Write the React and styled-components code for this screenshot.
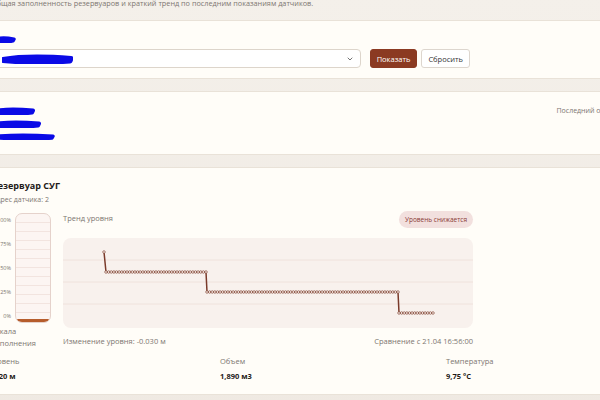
import React from 'react';
import styled, { createGlobalStyle } from 'styled-components';

const GlobalStyle = createGlobalStyle`
  html, body {
    margin: 0;
    padding: 0;
    overflow: hidden;
    background: #f0ebe5;
  }
  body {
    font-family: "Open Sans", "Noto Sans", sans-serif;
    color: #2b2622;
  }
`;

const COLORS = {
  border: '#e9e2d8',
  card: '#fffdf8',
  muted: '#7d7671',
  brown: '#8b3a22',
  line: '#7a3a2a',
};

const Page = styled.div`
  width: 684px;
  margin-left: -24px;
  margin-top: -4px;
  display: flex;
  flex-direction: column;
  gap: 12px;
  background: linear-gradient(180deg, #f4f0ea 0%, #efe9e2 100%);
  padding-bottom: 20px;
`;

const Subtitle = styled.div`
  padding: 0 15px;
  font-size: 7.3px;
  line-height: 14px;
  color: ${COLORS.muted};
  height: 12px;
  white-space: nowrap;
`;

const Card = styled.section`
  background: ${COLORS.card};
  border: 1px solid ${COLORS.border};
  border-radius: 8px;
  padding: ${(p) => p.$pad || '12px 15px'};
`;

const Scribble = ({ w, h = 8 }) => (
  <svg width={w} height={h} viewBox={`0 0 ${w} ${h}`} style={{ display: 'block' }}>
    <path
      d={`M1 ${h * 0.55} C ${w * 0.3} ${h * 0.2}, ${w * 0.6} ${h * 0.25}, ${w - 2} ${h * 0.45} L ${w - 3} ${h * 0.7} C ${w * 0.6} ${h * 0.9}, ${w * 0.3} ${h * 0.85}, 1 ${h * 0.65}`}
      fill="#0a0ae6"
      stroke="#0a0ae6"
      strokeWidth={h * 0.5}
      strokeLinejoin="round"
      strokeLinecap="round"
    />
  </svg>
);

const FilterLabel = styled.div`
  height: 12px;
  display: flex;
  align-items: center;
  margin: 1px 0 4px;
`;

const FilterRow = styled.div`
  display: flex;
  align-items: center;
  width: 478px;
  gap: 4px;
`;

const Select = styled.div`
  flex: 1;
  height: 19px;
  box-sizing: border-box;
  border: 1px solid #ddd5cb;
  border-radius: 4px;
  background: #fff;
  display: flex;
  align-items: center;
  justify-content: space-between;
  padding: 0 6px 0 9px;
  margin-right: 5px;
`;

const Button = styled.button`
  height: 19px;
  box-sizing: border-box;
  padding: 0 6px;
  border-radius: 3px;
  font-family: inherit;
  font-size: 7.5px;
  border: 1px solid ${(p) => (p.$primary ? COLORS.brown : '#ddd6ce')};
  background: ${(p) => (p.$primary ? COLORS.brown : '#fff')};
  color: ${(p) => (p.$primary ? '#fff' : '#333')};
`;

const InfoRow = styled.div`
  display: flex;
  justify-content: space-between;
  align-items: flex-start;
  min-height: 40px;
`;

const InfoLines = styled.div`
  display: flex;
  flex-direction: column;
  gap: 5px;
  padding-top: 1px;
`;

const InfoNote = styled.div`
  font-size: 7px;
  color: ${COLORS.muted};
  margin-right: -4px;
`;

const TankTitle = styled.div`
  font-size: 9px;
  font-weight: 700;
  line-height: 12px;
  color: #1f1b18;
`;

const TankAddr = styled.div`
  font-size: 7px;
  line-height: 10px;
  color: ${COLORS.muted};
  margin-top: 3px;
`;

const TankBody = styled.div`
  display: flex;
  gap: 12px;
  margin-top: 5px;
`;

const GaugeColumn = styled.div`
  width: 59px;
  display: flex;
  flex-direction: column;
  margin-top: 3px;
`;

const GaugeRow = styled.div`
  display: flex;
  gap: 4px;
`;

const Ticks = styled.div`
  width: 19px;
  height: 110px;
  display: flex;
  flex-direction: column;
  justify-content: space-between;
  align-items: flex-end;
  font-size: 5.5px;
  color: ${COLORS.muted};
  padding: 3px 0;
  box-sizing: border-box;
`;

const Gauge = styled.div`
  width: 36px;
  height: 110px;
  box-sizing: border-box;
  border: 1px solid #e5d2cb;
  border-radius: 7px;
  overflow: hidden;
  background: repeating-linear-gradient(
    180deg,
    #fcf5f2 0px,
    #fcf5f2 8px,
    #f2e4df 8px,
    #f2e4df 9px
  );
  display: flex;
  align-items: flex-end;
`;

const GaugeFill = styled.div`
  width: 100%;
  background: #b65d2c;
`;

const GaugeCaption = styled.div`
  font-size: 7.5px;
  line-height: 12px;
  color: ${COLORS.muted};
  margin-top: 2px;
`;

const ChartColumn = styled.div`
  width: 410px;
  display: flex;
  flex-direction: column;
`;

const ChartHead = styled.div`
  display: flex;
  justify-content: space-between;
  align-items: flex-start;
  height: 28px;
`;

const Muted = styled.div`
  font-size: 7.5px;
  color: ${COLORS.muted};
  line-height: 10px;
`;

const Badge = styled.span`
  margin-top: 1px;
  height: 17px;
  padding: 0 6px;
  border-radius: 9px;
  background: #f2e0de;
  color: #8a3b35;
  font-size: 6.5px;
  display: flex;
  align-items: center;
`;

const ChartBox = styled.div`
  height: 90px;
  border-radius: 8px;
  background: #f8f1ed;
  overflow: hidden;
`;

const ChartFoot = styled.div`
  display: flex;
  justify-content: space-between;
  margin-top: 8px;
`;

const Stats = styled.div`
  display: grid;
  grid-template-columns: 232px 226px 1fr;
  margin: 7px 0 0 -4px;
`;

const StatLabel = styled.div`
  font-size: 7.5px;
  color: ${COLORS.muted};
  line-height: 10px;
`;

const StatValue = styled.div`
  font-size: 7.5px;
  font-weight: 700;
  color: #1f1b18;
  line-height: 10px;
  margin-top: 5px;
`;

const buildPoints = () => {
  const pts = [[41, 14]];
  const segs = [
    [43, 143, 34],
    [144, 335, 54],
    [336, 370, 75],
  ];
  segs.forEach(([x0, x1, y]) => {
    const n = Math.round((x1 - x0) / 2.6);
    for (let i = 0; i <= n; i += 1) pts.push([x0 + ((x1 - x0) * i) / n, y]);
  });
  return pts;
};

const TrendChart = () => {
  const pts = buildPoints();
  return (
    <svg width="410" height="90" viewBox="0 0 410 90">
      {[22, 44, 66].map((y) => (
        <line key={y} x1="0" x2="410" y1={y} y2={y} stroke="#efe2dc" strokeWidth="1" />
      ))}
      <polyline
        points={pts.map((p) => p.join(',')).join(' ')}
        fill="none"
        stroke={COLORS.line}
        strokeWidth="1.5"
      />
      {pts.map(([x, y], i) => (
        <circle key={i} cx={x} cy={y} r="1.3" fill="#f6ece7" stroke={COLORS.line} strokeWidth="0.6" />
      ))}
    </svg>
  );
};

const Chevron = () => (
  <svg width="8" height="8" viewBox="0 0 24 24" fill="none" stroke="#555" strokeWidth="2.5" strokeLinecap="round" strokeLinejoin="round">
    <path d="m6 9 6 6 6-6" />
  </svg>
);

const App = () => (
  <>
    <GlobalStyle />
    <Page>
      <Subtitle>Общая заполненность резервуаров и краткий тренд по последним показаниям датчиков.</Subtitle>

      <Card $pad="11px 15px 10px">
        <FilterLabel>
          <Scribble w={24} h={7} />
        </FilterLabel>
        <FilterRow>
          <Select>
            <Scribble w={71} h={10} />
            <Chevron />
          </Select>
          <Button $primary>Показать</Button>
          <Button>Сбросить</Button>
        </FilterRow>
      </Card>

      <Card $pad="14px 15px 8px">
        <InfoRow>
          <InfoLines>
            <Scribble w={43} h={8} />
            <Scribble w={49} h={8} />
            <Scribble w={63} h={7} />
          </InfoLines>
          <InfoNote>Последний опрос: 16:56:00</InfoNote>
        </InfoRow>
      </Card>

      <Card $pad="12px 15px 13px">
        <TankTitle>Резервуар СУГ</TankTitle>
        <TankAddr>Адрес датчика: 2</TankAddr>
        <TankBody>
          <GaugeColumn>
            <GaugeRow>
              <Ticks>
                <span>100%</span>
                <span>75%</span>
                <span>50%</span>
                <span>25%</span>
                <span>0%</span>
              </Ticks>
              <Gauge>
                <GaugeFill style={{ height: '3%' }} />
              </Gauge>
            </GaugeRow>
            <GaugeCaption>Шкала заполнения</GaugeCaption>
          </GaugeColumn>
          <ChartColumn>
            <ChartHead>
              <Muted style={{ marginTop: 3 }}>Тренд уровня</Muted>
              <Badge>Уровень снижается</Badge>
            </ChartHead>
            <ChartBox>
              <TrendChart />
            </ChartBox>
            <ChartFoot>
              <Muted>Изменение уровня: -0.030 м</Muted>
              <Muted>Сравнение с 21.04 16:56:00</Muted>
            </ChartFoot>
          </ChartColumn>
        </TankBody>
        <Stats>
          <div>
            <StatLabel>Уровень</StatLabel>
            <StatValue>1,420 м</StatValue>
          </div>
          <div>
            <StatLabel>Объем</StatLabel>
            <StatValue>1,890 м3</StatValue>
          </div>
          <div>
            <StatLabel>Температура</StatLabel>
            <StatValue>9,75 °C</StatValue>
          </div>
        </Stats>
      </Card>
    </Page>
  </>
);

export default App;
